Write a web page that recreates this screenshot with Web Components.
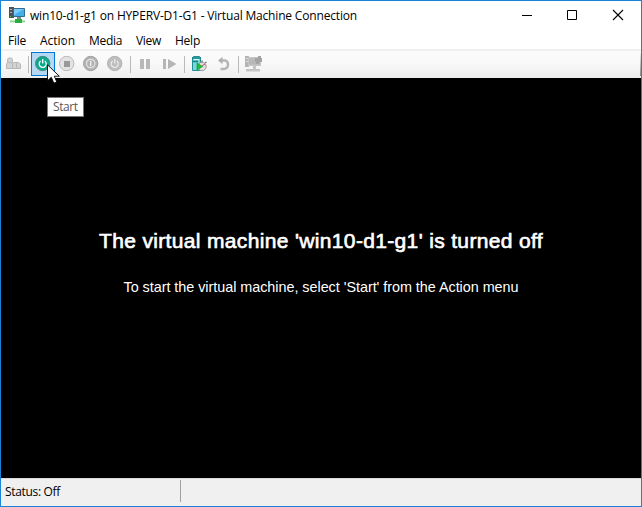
<!DOCTYPE html>
<html lang="en"><head><meta charset="utf-8"><title>Virtual Machine Connection</title>
<style>html,body{margin:0;height:100%;overflow:hidden}body{font:12px "Open Sans","Noto Sans",sans-serif;color:#000}</style></head>
<body><vm-window></vm-window>
<script>
const define=(name,html,ready)=>customElements.define(name,class extends HTMLElement{
  connectedCallback(){
    if(this.shadowRoot)return;
    const t=document.createElement('template');
    t.innerHTML=typeof html==='function'?html(this):html;
    this.attachShadow({mode:'open'}).append(t.content.cloneNode(true));
    if(ready)ready(this);
  }
});

// Single line of text whose tracking is adjusted to fill its given width.
define('text-line','<style>:host{display:block;white-space:nowrap}span{display:inline-block}</style><span><slot></slot></span>',el=>{
  const w=+el.getAttribute('w'),s=el.shadowRoot.querySelector('span');
  el.style.width=w+'px';
  const n=s.firstChild.assignedNodes({flatten:true}).map(t=>t.textContent).join('').length;
  if(n)s.style.letterSpacing=((w-s.getBoundingClientRect().width)/n).toFixed(3)+'px';
});

const disc=(f,r,g)=>`<circle cx="11.7" cy="11.5" r="7.2" fill="${f}" stroke="${r}" stroke-width="1"/>${g}`;
const power=c=>`<path d="M9.600 9.100a3.500 3.500 0 1 0 4.200 0M11.700 7v4.500" fill="none" stroke="${c}" stroke-width="1.300"/>`;
const icons={
  keys:'<g fill="#d2d2d2" stroke="#b8b8b8"><path d="M6.500 10.500v-3l1-1.500h3l1 1.500v3zM5.500 16.500v-4.500l1-1.500h4l1 1.500v4.500zM11.500 16.500v-4.500l1-1.500h5l2 1.500v4.500zM15.500 16v-5"/></g>',
  start:disc('#0aa98c','#4b8a80',power('#fff')),
  stop:disc('#e3e3e3','#b8b8b8','<path d="M9 9h6v6H9z" fill="#999"/>'),
  shut:disc('#b2b2b2','#a2a2a2','<circle cx="11.700" cy="11.500" r="4.200" fill="none" stroke="#e2e2e2" stroke-width="1.200"/><path d="M11.700 9v5" stroke="#eee" stroke-width="1.400"/>'),
  save:disc('#bebebe','#b3b3b3',power('#e8e8e8')),
  pause:'<path d="M7 7h4v10H7zM13 7h4v10h-4z" fill="#b8b8b8"/>',
  reset:'<path d="M6 7h3v10H6zM11 7l8.500 5-8.500 5z" fill="#b5b5b5"/>',
  check:'<path d="M5.500 5.500l1-1h6l1 1v13h-8z" fill="#78d7dc" stroke="#218f98"/><path d="M5 6h9M6 9.500h5" stroke="#167f88" stroke-width="1.500"/><path d="M7 7.500h5" stroke="#d3ffff"/><circle cx="15" cy="14.500" r="4.200" fill="#dedede" stroke="#999"/><path d="M15 10V8.500m3 2.500 1.500-1" stroke="#777" stroke-width="1.500"/><path d="M10 11v7l5.500-3.500z" fill="#16c52f" stroke="#168a2a" stroke-width=".6"/><path d="M15 14l3-2" stroke="#b85555"/>',
  revert:'<path d="M10 8.500H14q3 .5 3 4Q17 16.500 13 17H9.500" fill="none" stroke="#b5b5b5" stroke-width="2.400"/><path d="M7 8.500l4.500-3.800v7.600z" fill="#b0b0b0"/>',
  enhanced:'<path d="M4 4h4v11H4z" fill="#b4b4b4"/><path d="M7 5h13v9H7z" fill="#c4c4c4"/><path d="M5 6.500h2m-2 3h2" stroke="#ddd"/><path d="M8 6.500h11v6H8z" fill="#b8b8b8"/><path d="M14 6h3V4h3v2h1v4h-3v2h-3v-2h-1z" fill="#a3a3a3"/><path d="M12 14h3v3h4v2.500H5V17h7z" fill="#c4c4c4"/>'
};
define('tool-button',e=>`<style>:host{display:block;box-sizing:border-box;width:24px;height:24px}:host([active]){background:#b7d8f2;box-shadow:inset 0 0 0 1px #0078d7}svg{display:block}</style><svg width="24" height="24">${icons[e.getAttribute('icon')]}</svg>`);
define('tool-separator','<style>:host{display:block;box-sizing:border-box;width:6px;padding:4px 2px 3px 3px;height:24px}i{display:block;height:17px;background:#bababa}</style><i></i>');

define('vm-logo',`<style>:host{display:block;width:18px;height:18px}svg{display:block}</style><svg width="18" height="18">
<path d="M0 1h5v11H0z" fill="#4c5358"/><path d="M1 3.500h2m-2 3h2" stroke="#aeb8bc"/><path d="M1 10.500h1" stroke="#4ecb45"/>
<path d="M4.500 2.500h11v8h-11z" fill="#45aeea" stroke="#336c91"/><path d="M5 3h10L5 9z" fill="#79cdfa"/>
<path d="M8 11h4v2H8z" fill="#7b8d91"/><path d="M1 14.500h15v1.800H1z" fill="#86d48e"/><path d="M6 13h7v4H6z" fill="#2dab43"/></svg>`);

define('title-bar',`<style>:host{display:flex;height:30px;box-sizing:border-box;padding-left:8px;align-items:flex-start}
vm-logo{margin-top:5px}text-line{margin:6px 0 0 3px;line-height:18px}.c{margin-left:auto;display:block}</style>
<vm-logo></vm-logo><text-line w="327"><slot></slot></text-line>
<svg class="c" width="138" height="30"><path d="M19 14.500h10" stroke="#000"/><path d="M64.500 9.500h9v9h-9z" fill="none" stroke="#000"/><path d="M110 9l10 10m0-10-10 10" stroke="#000" stroke-width="1.100"/></svg>`);

define('menu-bar',`<style>:host{display:flex;height:18px;padding-left:7px;gap:14px;line-height:20px}</style>
<text-line w="18">File</text-line><text-line w="35">Action</text-line><text-line w="33">Media</text-line><text-line w="25">View</text-line><text-line w="25">Help</text-line>`);

define('tool-bar',`<style>:host{display:flex;box-sizing:border-box;height:29px;border-top:2px solid #f0f0f0;padding-top:1px;background:linear-gradient(#fcfcfc,#f9f9f9 40%,#eee)}
.end{margin:1px 0 2px auto;width:1px;background:linear-gradient(#eee,#888)}</style>
<tool-button icon="keys"></tool-button><tool-separator></tool-separator><tool-button icon="start" active></tool-button><tool-button icon="stop"></tool-button><tool-button icon="shut"></tool-button><tool-button icon="save"></tool-button><tool-separator></tool-separator><tool-button icon="pause"></tool-button><tool-button icon="reset"></tool-button><tool-separator></tool-separator><tool-button icon="check"></tool-button><tool-button icon="revert"></tool-button><tool-separator></tool-separator><tool-button icon="enhanced"></tool-button><span class="end"></span>`);

define('vm-screen',`<style>:host{display:flex;flex-direction:column;align-items:center;box-sizing:border-box;height:400px;padding-top:151px;background:#000;color:#fff;font-family:"Liberation Sans",Arial,sans-serif}
.h{font-size:21px;line-height:24px;-webkit-text-stroke:.65px #fff}.s{font-size:14.400px;line-height:18px;margin-top:25px}</style>
<text-line class="h" w="444">The virtual machine 'win10-d1-g1' is turned off</text-line>
<text-line class="s" w="395">To start the virtual machine, select 'Start' from the Action menu</text-line>`);

define('status-bar',`<style>:host{display:flex;box-sizing:border-box;height:28px;background:#f0f0f0;padding:1px 0 4px 4px;line-height:24px;border-top:1px solid #d9d9d9}
i{width:1px;background:#a0a0a0;margin-left:120px;height:22px}</style><text-line w="55">Status: Off</text-line><i></i>`);

define('tool-tip','<style>:host{position:absolute;left:47px;top:97px;width:37px;height:20px;box-sizing:border-box;border:1px solid #767676;background:#fff;color:#575757;padding-left:5px;line-height:18px}</style><text-line w="24.500"><slot></slot></text-line>');
define('mouse-pointer','<style>:host{position:absolute;left:47px;top:64px}svg{display:block}</style><svg width="14" height="21"><path d="M.5.800v16l3.800-3.600 2.500 6 3-1.200-2.500-5.800h5z" fill="#fff" stroke="#000" stroke-width=".9"/></svg>');

define('vm-window',`<style>:host{display:block;box-sizing:border-box;width:642px;height:507px;border:1px solid #1883d7;background:#fff;position:relative}tool-tip{margin:-1px}mouse-pointer{margin:-1px}</style>
<title-bar>win10-d1-g1 on HYPERV-D1-G1 - Virtual Machine Connection</title-bar><menu-bar></menu-bar><tool-bar></tool-bar><vm-screen></vm-screen><status-bar></status-bar><tool-tip>Start</tool-tip><mouse-pointer></mouse-pointer>`);
</script></body></html>
